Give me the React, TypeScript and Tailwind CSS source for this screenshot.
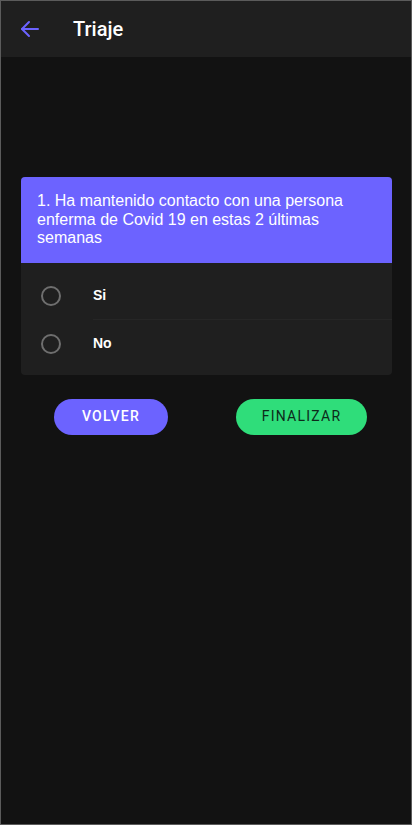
import React from "react";

export default function App() {
  return (
    <div className="h-[825px] w-[412px] box-border border border-[#5b5b5b] bg-[#121212] flex flex-col overflow-hidden" style={{ fontFamily: "Roboto, 'Liberation Sans', Arial, sans-serif" }}>
      <header className="h-[56px] shrink-0 bg-[#1f1f1f] flex items-center">
        <div className="w-[72px] flex items-center pl-[17px]">
          <svg width="24" height="24" viewBox="0 0 24 24" fill="none" stroke="#6c63ff" strokeWidth="2" strokeLinecap="round" strokeLinejoin="round">
            <path d="M20 12H4" />
            <path d="M11 5l-7 7 7 7" />
          </svg>
        </div>
        <h1 className="text-[20px] font-medium text-white leading-none">Triaje</h1>
      </header>
      <main className="flex-1 flex flex-col pt-[120px]">
        <div className="ml-[20px] w-[371px] rounded-[4px] overflow-hidden bg-[#1f1f1f]">
          <div className="bg-[#6c63ff] px-[16px] pt-[15px] pb-[15px] text-white text-[16px] leading-[18.5px]" style={{ fontFamily: "'Liberation Sans', Arial, sans-serif" }}>
            1. Ha mantenido contacto con una persona enferma de Covid 19 en estas 2 últimas semanas
          </div>
          <div className="pt-[9px] pb-[7px]">
            {["Si", "No"].map((o, i) => (
              <div key={o} className="h-[48px] flex items-center">
                <div className="w-[72px] pl-[20px] flex items-center">
                  <div className="w-[20px] h-[20px] rounded-full border-2 border-[#6e6e6e] box-border" />
                </div>
                <div className={"flex-1 h-full flex items-center text-white text-[14px] font-bold " + (i === 0 ? "border-b border-[#262626]" : "")} style={{ fontFamily: "'Liberation Sans', Arial, sans-serif" }}>
                  {o}
                </div>
              </div>
            ))}
          </div>
        </div>
        <div className="flex mt-[24px]">
          <button className="ml-[53px] w-[114px] h-[36px] rounded-full bg-[#6c63ff] text-white text-[14px] font-medium tracking-[1.25px]">
            VOLVER
          </button>
          <button className="ml-[68px] w-[131px] h-[36px] rounded-full bg-[#2fdd7a] text-[#0d2a1a] text-[14px] font-normal tracking-[1.25px]">
            FINALIZAR
          </button>
        </div>
      </main>
    </div>
  );
}
